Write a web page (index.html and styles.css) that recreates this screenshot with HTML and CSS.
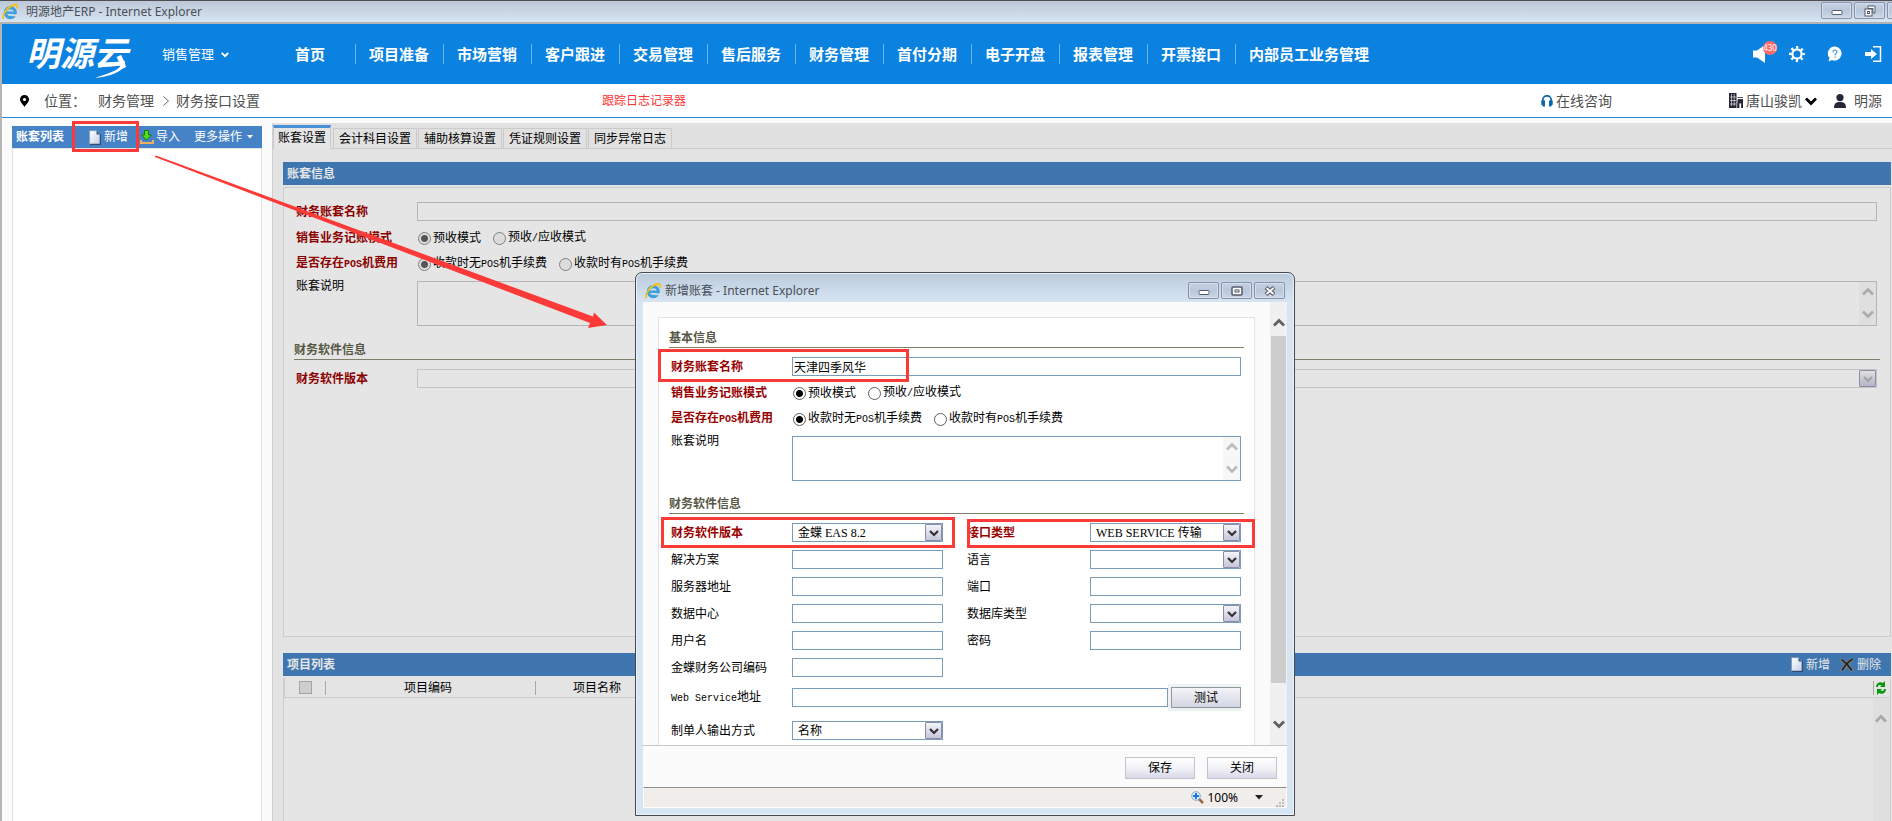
FILE: index.html
```
<!DOCTYPE html>
<html lang="zh-CN">
<head>
<meta charset="utf-8">
<title>明源地产ERP</title>
<link rel="stylesheet" href="styles.css">
</head>
<body>
<svg class="defs" width="0" height="0" aria-hidden="true">
  <defs>
    <linearGradient id="paper" x1="0" y1="0" x2="1" y2="1"><stop offset="0" stop-color="#fff"/><stop offset="1" stop-color="#c3cde6"/></linearGradient>
    <symbol id="ie" viewBox="0 0 16 16">
      <circle cx="8.3" cy="8.6" r="5" fill="none" stroke="#3d9fdc" stroke-width="3.2"/>
      <path d="M4 8.7h9.5" stroke="#3d9fdc" stroke-width="2.4"/>
      <path d="M10 10.4h5.6v1.8H10z" fill="#d3e0ec"/>
      <path d="M1.6 15C-.8 12 5 2.500 12.500 1c3-.4 3.200 1.500 2.300 3.600" fill="none" stroke="#f3c01c" stroke-width="1.800"/>
    </symbol>
    <symbol id="doc" viewBox="0 0 12 15">
      <path d="M1 1h7l3 3v10H1z" fill="url(#paper)"/>
      <path d="M1 14.300h10.300V4" fill="none" stroke="#2d4a70" stroke-width="1.200"/>
      <path d="M7.500 0.500l4 4h-4z" fill="#3d5a80"/>
      <path d="M.6 14V.7h7" fill="none" stroke="#9fb0c8" stroke-width=".8"/>
    </symbol>
    <symbol id="chev" viewBox="0 0 12 10"><path d="M1 2.500l5 5 5-5" fill="none" stroke="currentColor" stroke-width="2.800"/></symbol>
    <symbol id="chev-up" viewBox="0 0 12 10"><path d="M1 7.500l5-5 5 5" fill="none" stroke="currentColor" stroke-width="2.800"/></symbol>
    <symbol id="min" viewBox="0 0 12 12"><rect x="1" y="5.500" width="10" height="4" rx="1" fill="#fff" stroke="#555a6b"/></symbol>
  </defs>
</svg>

<div class="titlebar">
  <svg class="ico16"><use href="#ie"/></svg>
  <span class="titlebar-text">明源地产ERP - Internet Explorer</span>
  <div class="winbtns">
    <button class="winbtn" aria-label="最小化"><svg width="12" height="12"><use href="#min"/></svg></button>
    <button class="winbtn" aria-label="还原"><svg width="12" height="12" viewBox="0 0 12 12"><path d="M4 1h7v7H9V3.500H4z" fill="#fff" stroke="#555a6b"/><rect x="1" y="4" width="7" height="7" fill="#fff" stroke="#555a6b"/><rect x="3.500" y="6.500" width="2" height="2" fill="none" stroke="#555a6b"/></svg></button>
    <button class="winbtn" aria-label="关闭"></button>
  </div>
</div>

<div class="app">
<header class="header">
  <div class="logo">明源云<svg class="logo-tail" viewBox="0 0 36 20"><path d="M1 19C12 18 29 14 31 5c1-4-3-5-6-3 2 0 3 1 2 4C25 12 11 15 1 19z" fill="#fff"/></svg></div>
  <button class="module">销售管理<svg width="8" height="7" viewBox="0 0 12 10"><path d="M1 2.500l5 5 5-5" fill="none" stroke="#fff" stroke-width="3"/></svg></button>
  <nav class="nav">
    <a href="#">首页</a><a href="#">项目准备</a><a href="#">市场营销</a><a href="#">客户跟进</a><a href="#">交易管理</a><a href="#">售后服务</a><a href="#">财务管理</a><a href="#">首付分期</a><a href="#">电子开盘</a><a href="#">报表管理</a><a href="#">开票接口</a><a href="#">内部员工业务管理</a>
  </nav>
  <div class="header-icons">
    <button class="hicon" aria-label="消息"><svg width="16" height="18" viewBox="0 0 16 18"><path d="M0 5.500h4L12 0v18l-8-5.500H0z" fill="#fff"/></svg><span class="badge">430</span></button>
    <button class="hicon" aria-label="设置"><svg width="16" height="16" viewBox="0 0 16 16"><circle cx="8" cy="8" r="6.600" fill="none" stroke="#fff" stroke-width="2.800" stroke-dasharray="2.200 2.983" stroke-dashoffset="1.100"/><circle cx="8" cy="8" r="4.600" fill="none" stroke="#fff" stroke-width="2.200"/></svg></button>
    <button class="hicon" aria-label="帮助"><svg width="16" height="16" viewBox="0 0 16 16"><path d="M8 .5a7 7 0 1 1-3 13.500L1.500 15.500 2.500 12A7 7 0 0 1 8 .5z" fill="#fff"/><path d="M6 6.200c0-3 4.200-2.500 4 0-.2 1.300-2 1.300-2 3M8 10.500v1.200" fill="none" stroke="#4da3e8" stroke-width="1.300"/></svg></button>
    <button class="hicon" aria-label="退出"><svg width="17" height="16" viewBox="0 0 17 16"><path d="M8 .8h7.500v14.400H8" fill="none" stroke="#fff" stroke-width="1.500"/><path d="M0 6h6V3l6 5-6 5v-3H0z" fill="#fff"/></svg></button>
  </div>
</header>

<div class="locbar">
  <div class="crumbs">
    <svg width="9" height="12" viewBox="0 0 9 12"><path d="M4.500 0a4.500 4.500 0 0 1 4.500 4.600C9 7.500 6 9.500 4.500 12 3 9.500 0 7.500 0 4.600A4.500 4.500 0 0 1 4.500 0z" fill="#000"/><circle cx="4.500" cy="4.500" r="1.600" fill="#fff"/></svg>
    <span class="crumb-label">位置：</span><a href="#">财务管理</a>
    <svg class="crumb-sep" width="6" height="10" viewBox="0 0 6 10"><path d="M.5.5l5 4.500-5 4.500" fill="none" stroke="#666"/></svg>
    <a href="#">财务接口设置</a>
  </div>
  <a class="tracelog" href="#">跟踪日志记录器</a>
  <div class="loc-right">
    <a class="consult" href="#"><svg width="12" height="12" viewBox="0 0 12 12"><path d="M1.800 7V5a4.200 4.200 0 0 1 8.400 0v2" fill="none" stroke="#0c68a8" stroke-width="1.800"/><path d="M.3 5.500h3.700v6H2.200L.3 9.500zM11.700 5.500H8v6h1.800l1.900-2z" fill="#0c68a8"/></svg>在线咨询</a>
    <button class="company"><svg width="14" height="15" viewBox="0 0 14 15"><path d="M0 0h7.500v15H0z" fill="#262636"/><path d="M2.500 1v12M5.200 1v12M1 4h6M1 7.500h6M1 11h6" stroke="#fff" stroke-width=".6"/><path d="M8.500 4.500H14M9 6.500h5V15h-1.500v-5H10v5H8.500z" fill="#262636" stroke="#262636" stroke-width=".8"/></svg><span>唐山骏凯</span><svg class="company-caret" width="12" height="10"><use href="#chev"/></svg></button>
    <button class="user"><svg width="12" height="14" viewBox="0 0 12 14"><circle cx="6" cy="3.600" r="3.600" fill="#262636"/><path d="M0 14c0-4.500 2-6 6-6s6 1.500 6 6z" fill="#262636"/></svg>明源</button>
  </div>
</div>

<div class="body">
  <aside class="side">
    <div class="bar side-bar">
      <h2>账套列表</h2>
      <button class="tool add"><svg width="12" height="15"><use href="#doc"/></svg>新增<i class="mark mark-add"></i></button>
      <button class="tool import"><svg width="14" height="14" viewBox="0 0 14 14"><path d="M1 10v3h12v-3" fill="none" stroke="#f0b060" stroke-width="2"/><path d="M4.500.5h4v4.500h3L6.500 10l-5-5h3z" fill="#52e01c" stroke="#18780c"/></svg>导入</button>
      <button class="tool more">更多操作<svg width="6" height="4" viewBox="0 0 6 4"><path d="M0 0h6L3 3.500z" fill="#fff"/></svg></button>
    </div>
    <div class="side-list"></div>
  </aside>

  <main class="main">
    <div class="tabs" role="tablist">
      <button class="tab active" role="tab">账套设置</button><button class="tab" role="tab">会计科目设置</button><button class="tab" role="tab">辅助核算设置</button><button class="tab" role="tab">凭证规则设置</button><button class="tab" role="tab">同步异常日志</button>
    </div>
    <div class="content">
      <div class="bar dim"><h2>账套信息</h2></div>
      <section class="panel muted">
        <div class="row wide"><label class="req" for="b1">财务账套名称</label><input id="b1" type="text" disabled></div>
        <div class="row radio-row"><span class="req">销售业务记账模式</span><div class="radios"><label><input type="radio" name="bm" checked disabled><span>预收模式</span></label><label><input type="radio" name="bm" disabled><span>预收<span class="latin">/</span>应收模式</span></label></div></div>
        <div class="row radio-row"><span class="req">是否存在<span class="latin">POS</span>机费用</span><div class="radios"><label><input type="radio" name="bp" checked disabled><span>收款时无<span class="latin">POS</span>机手续费</span></label><label><input type="radio" name="bp" disabled><span>收款时有<span class="latin">POS</span>机手续费</span></label></div></div>
        <div class="row area-row"><label for="b2">账套说明</label><div class="area"><textarea id="b2" disabled></textarea><div class="area-scroll"><svg width="12" height="10"><use href="#chev-up"/></svg><svg width="12" height="10"><use href="#chev"/></svg></div></div></div>
        <h3>财务软件信息</h3>
        <div class="row wide"><label class="req" for="b3">财务软件版本</label><div class="sel"><select id="b3" disabled><option></option></select><i><svg width="10" height="8"><use href="#chev"/></svg></i></div></div>
      </section>
      <div class="bar dim list-bar"><h2>项目列表</h2>
        <button class="tool"><svg width="12" height="15"><use href="#doc"/></svg>新增</button>
        <button class="tool"><svg width="14" height="14" viewBox="0 0 14 14"><path d="M1 1.500C5 4 9 8 12.500 13M12.500 1C8 4 4 9 1.500 13" fill="none" stroke="#9a8c78" stroke-width="3"/><path d="M1.500 1.500C5 4 9 8 12 12.500M12.500 1C8 4 4 9 2 12.500" fill="none" stroke="#222" stroke-width="1.800"/></svg>删除</button>
      </div>
      <section class="grid-box">
        <div class="grid-head">
          <table><thead><tr><th class="c-check"><input type="checkbox" aria-label="全选" disabled></th><th class="c-code">项目编码</th><th class="c-name">项目名称</th><th></th></tr></thead></table>
          <button class="refresh" aria-label="刷新"><svg width="12" height="14" viewBox="0 0 12 14"><path d="M1 6c0-4 4-6 7-4l2-2v6H5l1.500-1.500C4.500 3.500 3 4 3 6zM11 8c0 4-4 6-7 4l-2 2V8h5l-1.500 1.500C7.500 10.500 9 10 9 8z" fill="#06980c"/></svg></button>
        </div>
        <div class="grid-body"><div class="grid-scroll"><svg width="12" height="10"><use href="#chev-up"/></svg></div></div>
      </section>
    </div>
  </main>
</div>
</div>

<svg class="arrow" width="460" height="180" viewBox="0 0 460 180" aria-hidden="true"><path d="M0 0l1-.5 437 161 1-4 13 12.500-19 3 2-5L0 1z" fill="#fc3b38"/></svg>

<div class="dialog" role="dialog" aria-label="新增账套">
  <div class="dlg-title">
    <svg class="ico16"><use href="#ie"/></svg>
    <span>新增账套 - Internet Explorer</span>
    <div class="winbtns">
      <button class="winbtn" aria-label="最小化"><svg width="12" height="12"><use href="#min"/></svg></button>
      <button class="winbtn" aria-label="最大化"><svg width="12" height="12" viewBox="0 0 12 12"><rect x="1" y="2" width="10" height="8" rx="1" fill="#fff" stroke="#555a6b" stroke-width="1.500"/><rect x="4" y="5" width="4" height="2" fill="none" stroke="#555a6b"/></svg></button>
      <button class="winbtn" aria-label="关闭"><svg width="12" height="12" viewBox="0 0 12 12"><path d="M2 2.500l8 7M10 2.500l-8 7" stroke="#555a6b" stroke-width="4"/><path d="M2.500 3l7 6M9.500 3l-7 6" stroke="#fff" stroke-width="2"/></svg></button>
    </div>
  </div>
  <div class="dlg-client">
    <div class="dlg-scroll">
      <form class="card">
        <h3>基本信息</h3>
        <div class="row wide"><label class="req" for="f1">财务账套名称</label><input id="f1" type="text" value="天津四季风华"><i class="mark mark-name"></i></div>
        <div class="row radio-row"><span class="req">销售业务记账模式</span><div class="radios"><label><input type="radio" name="m" checked><span>预收模式</span></label><label><input type="radio" name="m"><span>预收<span class="latin">/</span>应收模式</span></label></div></div>
        <div class="row radio-row"><span class="req">是否存在<span class="latin">POS</span>机费用</span><div class="radios"><label><input type="radio" name="p" checked><span>收款时无<span class="latin">POS</span>机手续费</span></label><label><input type="radio" name="p"><span>收款时有<span class="latin">POS</span>机手续费</span></label></div></div>
        <div class="row area-row"><label for="f2">账套说明</label><div class="area"><textarea id="f2"></textarea><div class="area-scroll"><svg width="12" height="10"><use href="#chev-up"/></svg><svg width="12" height="10"><use href="#chev"/></svg></div></div></div>
        <h3>财务软件信息</h3>
        <div class="row two">
          <label class="req" for="f3">财务软件版本</label><div class="sel"><select id="f3"><option>金蝶 EAS 8.2</option></select><i><svg width="10" height="8"><use href="#chev"/></svg></i></div>
          <label class="req" for="f4">接口类型</label><div class="sel"><select id="f4"><option>WEB SERVICE 传输</option></select><i><svg width="10" height="8"><use href="#chev"/></svg></i></div>
          <i class="mark mark-version"></i><i class="mark mark-type"></i>
        </div>
        <div class="row two"><label for="f5">解决方案</label><input id="f5" type="text"><label for="f6">语言</label><div class="sel"><select id="f6"><option></option></select><i><svg width="10" height="8"><use href="#chev"/></svg></i></div></div>
        <div class="row two"><label for="f7">服务器地址</label><input id="f7" type="text"><label for="f8">端口</label><input id="f8" type="text"></div>
        <div class="row two"><label for="f9">数据中心</label><input id="f9" type="text"><label for="f10">数据库类型</label><div class="sel"><select id="f10"><option></option></select><i><svg width="10" height="8"><use href="#chev"/></svg></i></div></div>
        <div class="row two"><label for="f11">用户名</label><input id="f11" type="text"><label for="f12">密码</label><input id="f12" type="password"></div>
        <div class="row two"><label for="f13">金蝶财务公司编码</label><input id="f13" type="text"></div>
        <div class="row web"><label for="f14"><span class="latin">Web Service</span>地址</label><input id="f14" type="text"><div class="test-box"><button type="button" class="btn test">测试</button></div></div>
        <div class="row two last"><label for="f15">制单人输出方式</label><div class="sel"><select id="f15"><option>名称</option></select><i><svg width="10" height="8"><use href="#chev"/></svg></i></div></div>
      </form>
      <div class="vscroll"><svg width="12" height="10"><use href="#chev-up"/></svg><div class="thumb"></div><svg width="12" height="10"><use href="#chev"/></svg></div>
    </div>
    <div class="dlg-foot"><button class="btn">保存</button><button class="btn">关闭</button></div>
    <div class="status">
      <button class="zoom"><svg width="13" height="13" viewBox="0 0 13 13"><path d="M8 8l4 4" stroke="#a0683c" stroke-width="2.500"/><circle cx="5" cy="5" r="4.300" fill="#dff0ff" stroke="#8aa8cc"/><path d="M5 2v6M2 5h6" stroke="#1878d8" stroke-width="2"/></svg>100%<svg class="zoom-caret" width="8" height="5" viewBox="0 0 8 5"><path d="M0 0h8L4 4.500z" fill="#222"/></svg></button>
      <svg class="grip" width="8" height="8" viewBox="0 0 8 8"><path d="M6 0h2v2H6zM3 3h2v2H3zM6 3h2v2H6zM0 6h2v2H0zM3 6h2v2H3zM6 6h2v2H6z" fill="#c0bcb8"/></svg>
    </div>
  </div>
</div>
</body>
</html>
```

FILE: styles.css
```
* { box-sizing: border-box; }

body {
  margin: 0;
  height: 100vh;
  overflow: hidden;
  position: relative;
  display: flex;
  flex-direction: column;
  background: #fbfbfb;
  color: #000;
  font: 12px/18px "Liberation Serif", "Noto Sans CJK SC", sans-serif;
}

button, input, select, textarea { font: inherit; color: inherit; margin: 0; }
button { border: 0; padding: 0; background: none; white-space: nowrap; }
a { color: inherit; text-decoration: none; }
h2, h3 { margin: 0; font-size: 12px; }
svg { display: block; flex: none; }
.defs { position: absolute; }
.ico16 { width: 16px; height: 16px; }
/* half-width latin runs beside 12px Chinese */
.latin { font-family: "Liberation Mono", monospace; font-size: 10px; }

/* browser window chrome */
.titlebar {
  flex: none;
  height: 24px;
  padding-left: 2px;
  display: flex;
  align-items: center;
  gap: 8px;
  border-top: 1px solid #4e4e54;
  border-bottom: 2px solid #b3b3b3;
  background: linear-gradient(#bcc8d8, #d7e4f1);
  overflow: hidden;
}
.titlebar-text, .dlg-title > span {
  font-family: "Noto Sans", "Noto Sans CJK SC", sans-serif;
  color: #4a5058;
  white-space: nowrap;
}
.winbtns { margin-left: auto; display: flex; gap: 2px; }
.titlebar .winbtns { align-self: flex-start; margin-top: 1px; margin-right: -26px; }
.winbtn {
  width: 31px;
  height: 17px;
  display: grid;
  place-items: center;
  border: 1px solid #8591ad;
  border-radius: 2px;
  background: linear-gradient(#c6d2e2, #b9c7da 50%, #cad7e6);
  box-shadow: inset 0 0 0 1px #d6e0ec;
}

.app { flex: 1; min-height: 0; display: flex; flex-direction: column; border-left: 2px solid #b5b5b5; }

.header, .locbar, .titlebar { font-family: "Noto Sans", "Noto Sans CJK SC", sans-serif; }
.header {
  flex: none;
  height: 60px;
  display: flex;
  align-items: center;
  background: #0b82df;
  color: #fff;
}
.logo {
  position: relative;
  width: 110px;
  margin-left: 24px;
  padding-bottom: 5px;
  font: italic bold 34px/40px "Noto Sans CJK SC", sans-serif;
  white-space: nowrap;
}
.logo-tail { position: absolute; left: 68px; top: 27px; width: 36px; height: 20px; }
.module { margin-left: 26px; display: flex; align-items: center; gap: 7px; font-size: 13px; }
.nav { margin-left: 52px; display: flex; align-items: center; }
.nav a {
  padding: 0 13px;
  border-left: 1px solid #6bb4ee;
  font-size: 15px;
  line-height: 20px;
  font-weight: bold;
  white-space: nowrap;
  width: 88px;
}
.nav a:first-child { border-left-color: transparent; }
.nav a:last-child { width: auto; }
.nav a:first-child { width: 74px; }
.header-icons { margin-left: auto; margin-right: 10px; display: flex; align-items: center; gap: 22px; }
.hicon { position: relative; }
.hicon:first-child { margin-right: -2px; }
.badge {
  position: absolute;
  left: 10px;
  top: -4px;
  width: 14px;
  height: 14px;
  border-radius: 7px;
  background: #ff6b6b;
  font-size: 8px;
  line-height: 14px;
  text-align: center;
}

.locbar {
  flex: none;
  height: 34px;
  display: grid;
  grid-template-columns: 600px 1fr auto;
  align-items: center;
  background: #fff;
  border-bottom: 1px solid #2588d8;
  color: #505050;
  font-size: 14px;
}
.crumbs { display: flex; align-items: center; padding-left: 18px; }
.crumb-label { margin: 0 12px 0 15px; }
.crumb-sep { margin: 0 7px 0 9px; }
.tracelog { font-size: 12px; color: #ff3434; }
.loc-right { display: flex; align-items: center; padding-right: 10px; }
.consult, .company, .user { display: flex; align-items: center; gap: 3px; }
.consult { margin-right: 117px; }
.company-caret { color: #000; }
.user { margin-left: 17px; gap: 8px; }

/* work area */
.body { flex: 1; min-height: 0; display: flex; padding-top: 5px; }
.side { width: 250px; margin: 3px 10px 0; flex: none; display: flex; flex-direction: column; }
.bar { flex: none; display: flex; align-items: center; height: 23px; padding-left: 4px; color: #fff; background: #4682c6; }
.side-bar { height: 22px; }
.bar.dim { background: #4076b0; color: #e6e6e6; }
.tool { position: relative; display: flex; align-items: center; gap: 3px; }
.add { margin-left: 25px; }
.import { margin-left: 12px; gap: 2px; }
.more { margin-left: 14px; gap: 5px; }
.side-list { flex: 1; border: 1px solid #e2e2e2; border-bottom: 0; background: #fff; }

.main { flex: 1; min-width: 0; display: flex; flex-direction: column; background: #e1e1e1; border-left: 1px solid #cfcfcf; }
.tabs { flex: none; height: 26px; padding-top: 2px; display: flex; align-items: flex-end; gap: 1px; border-bottom: 1px solid #cccccc; }
.tab { height: 20px; padding: 0 5px; border: 1px solid #cbcbcb; border-bottom: 0; }
.tab.active { height: 24px; padding: 0 4px 2px; margin-right: 1px; margin-bottom: -1px; border-top: 3px solid #4a90d9; background: #e5e5e5; }
.content { flex: 1; min-height: 0; display: flex; flex-direction: column; padding: 13px 1px 0 10px; background: #e3e3e3; }

.panel { flex: 1; min-height: 0; margin: 2px 0 16px; padding: 10px; border: 1px solid #cdcdcd; background: #e5e5e5; }

h3 { height: 20px; line-height: 20px; border-bottom: 1px solid #7e806c; color: #575746; }
.area-row + h3 { margin-top: 10px; }
.card .area-row + h3 { margin-top: 9px; }
h3 + .row { margin-top: 5px; }
.row { position: relative; display: grid; grid-template-columns: 121px 1fr; align-items: center; height: 27px; padding: 0 3px 0 2px; }
.radio-row { height: 26px; }
.area-row { height: 53px; align-items: start; }
.two { grid-template-columns: 121px 1fr 147px 1fr; }
.two > :nth-child(3) { padding-left: 24px; }
.web { grid-template-columns: 121px 1fr 73px; height: 33px; }
.last { height: 33px; }
.req { color: #990000; font-weight: bold; }
.muted .req { color: #8b0000; }

input[type="text"], input[type="password"], select, textarea {
  width: 100%;
  height: 19px;
  padding: 0 1px;
  border: 1px solid #7a9cbb;
  border-radius: 0;
  background: #fff;
  outline: 0;
  resize: none;
  appearance: none;
}
.muted input[type="text"], .muted select, .muted textarea { border-color: #b5b5b5; background: #e5e5e5; }
.radios { display: flex; gap: 11px; }
.radios label { display: flex; align-items: center; gap: 2px; white-space: nowrap; }
.radios input {
  appearance: none;
  width: 13px;
  height: 13px;
  margin: 0 0 0 1px;
  border: 1px solid #606060;
  border-radius: 50%;
  background: #fff;
}
.radios input:checked { background: radial-gradient(circle, #000 0 3px, #fff 4px); }
.muted .radios input { border-color: #808080; background: #dcdcdc; }
.muted .radios input:checked { background: radial-gradient(circle, #555 0 3px, #dcdcdc 4px); }

.area { position: relative; height: 45px; margin-top: 4px; }
.area textarea { height: 45px; display: block; }
.area-scroll {
  position: absolute;
  top: 1px; right: 1px; bottom: 1px;
  width: 17px;
  display: flex;
  flex-direction: column;
  justify-content: space-between;
  align-items: center;
  padding: 5px 0 6px;
  background: #f7f7f7;
  color: #bdbdbd;
}
.muted .area-scroll { background: #dfdfdf; color: #adadad; }
.sel { position: relative; display: flex; }
.sel select { padding: 0 20px 0 5px; }
.sel i {
  position: absolute;
  right: 1px; top: 1px;
  width: 17px;
  height: 17px;
  display: grid;
  place-items: center;
  border: 1px solid #8c8ca4;
  border-radius: 1px;
  background: linear-gradient(#f4f4fa, #c6c6dc);
  color: #333;
  pointer-events: none;
}
.muted .sel i { background: linear-gradient(#e0e0e2, #b4b4c8); color: #a0a0a8; }

.list-bar .tool:nth-of-type(1) { margin-left: auto; }
.list-bar .tool { margin-right: 10px; }
.grid-box { flex: none; height: 145px; padding-top: 2px; display: flex; flex-direction: column; }
.grid-head { display: flex; height: 20px; border: 1px solid #cdcdcd; border-top: 0; border-left-width: 2px; background: #e4e4e4; }
.grid-head table { flex: 1; border-collapse: collapse; table-layout: fixed; }
.grid-head th { padding: 0; height: 19px; font-weight: normal; line-height: 14px; background: linear-gradient(#aaa69a, #aaa69a) right / 1px 14px no-repeat; }
.grid-head th:last-child { background: none; }
.grid-head th.c-name { background: none; }
.grid-head th.c-code { padding-right: 6px; }
.c-check { width: 41px; }
.c-code { width: 210px; }
.c-name { width: 122px; }
.c-check input { appearance: none; display: block; width: 13px; height: 13px; margin: 0 auto; border: 1px solid #a4a4a4; background: #cecece; }
.refresh { width: 17px; padding-left: 2px; background: linear-gradient(#aaa69a, #aaa69a) left / 1px 14px no-repeat; }
.grid-body { flex: 1; border: 1px solid #cdcdcd; border-width: 0 1px; display: flex; justify-content: flex-end; background: #e5e5e5; }
.grid-scroll { width: 17px; padding: 16px 0 0 2px; background: #dfdfdf; color: #a8a8a8; }

/* red annotations */
.mark { position: absolute; border: 3px solid #fc3b38; pointer-events: none; }
.mark-add { left: -17px; top: -7px; width: 67px; height: 31px; }
.mark-name { left: -11px; top: -4px; width: 251px; height: 33px; }
.mark-version { left: -8px; top: -2px; width: 294px; height: 31px; }
.mark-type { right: -11px; top: 0; width: 288px; height: 29px; z-index: 1; }
.arrow { position: absolute; left: 155px; top: 156px; overflow: visible; }

/* pop-up window */
.dialog {
  position: absolute;
  left: 635px;
  top: 272px;
  width: 660px;
  padding: 0 7px 7px;
  border: 1px solid #46484e;
  border-radius: 7px 7px 0 0;
  background: linear-gradient(#bccbdc, #d7e5f3 30px);
  box-shadow: inset 0 0 0 1px #eaf2fa;
}
.dlg-title { height: 29px; padding: 6px 2px 0; display: flex; align-items: center; gap: 4px; }
.dlg-client { background: #fbfbfb; }
.dlg-scroll { display: flex; justify-content: space-between; height: 443px; overflow: hidden; }
.card { flex: 1; height: 440px; margin: 15px 15px 0; padding: 10px; border: 1px solid #e3e3e3; border-bottom: 0; background: #fff; }
.vscroll { width: 17px; display: flex; flex-direction: column; align-items: center; padding: 16px 0; background: #f0f0f0; color: #606060; }
.thumb { width: 15px; height: 347px; margin: 8px 0 auto; background: #cdcdcd; }
.test-box { height: 27px; padding: 3px 0 3px 3px; background: #eef1f1; }
.btn {
  width: 70px;
  height: 22px;
  border: 1px solid #c3c3c8;
  background: linear-gradient(#fff, #f2f2f7 50%, #d9d9e8);
}
.test { height: 21px; display: block; border-color: #8f9aa0; background: linear-gradient(#f4f4f8, #d3d6e2); }
.dlg-foot { height: 42px; padding: 2px 10px 0; display: flex; align-items: center; justify-content: flex-end; gap: 12px; border-top: 1px solid #c6c6c6; }
.status {
  height: 21px;
  display: flex;
  align-items: center;
  justify-content: flex-end;
  padding-right: 2px;
  border: 1px solid #fff;
  border-top-color: #8d8d8d;
  background: #f0edeb;
  font-family: "Noto Sans", sans-serif;
}
.zoom { display: flex; align-items: center; gap: 3px; }
.zoom-caret { margin-left: 14px; }
.grip { margin-left: 13px; align-self: flex-end; }
```
